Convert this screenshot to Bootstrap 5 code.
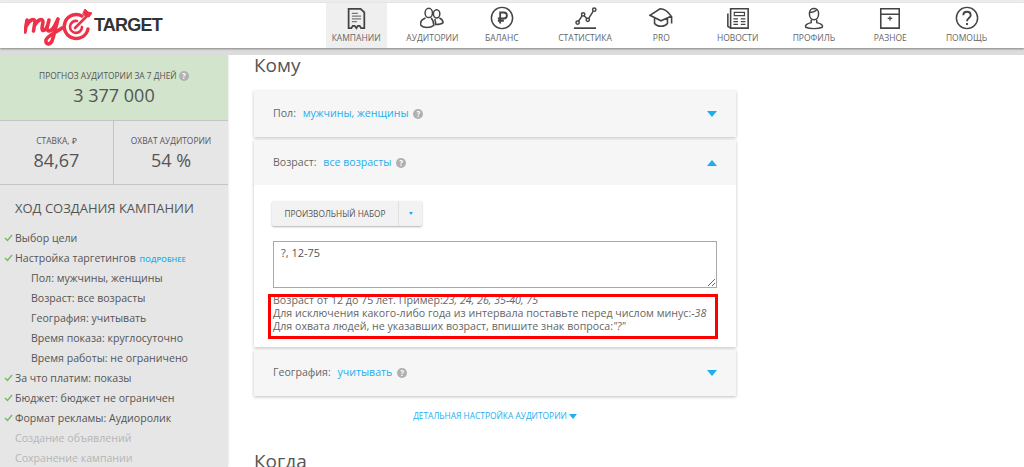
<!DOCTYPE html>
<html lang="en">
<head>
<meta charset="UTF-8">
<title>myTarget</title>
<link href="https://cdn.jsdelivr.net/npm/bootstrap@5.3.0/dist/css/bootstrap.min.css" rel="stylesheet">
<style>
html, body { height: 467px; overflow: hidden; }
body { font-family: "Open Sans", sans-serif; color: #555; background: #fff; font-size: 11px; }
.top-line { height: 3px; background: #ececec; }
.top-head { height: 45px; background: #fff; box-shadow: 0 1px 2px rgba(0,0,0,.4); position: relative; z-index: 3; }
.logo-box { width: 318px; padding-left: 24px; }
.logo-word { font-family: "Liberation Sans", sans-serif; font-weight: 700; font-size: 18px; color: #333; letter-spacing: -.8px; }
.nav-cell { width: 76.3px; }
.nav-cell.shift { margin-left: -7px; margin-right: 7px; }
.nav-lnk { width: 61px; height: 45px; color: #666; font-size: 8.5px; text-decoration: none; padding-top: 3px; white-space: nowrap; }
.nav-lnk.on { background: #efefef; }
.nav-lnk svg { width: 24px; height: 24px; margin-bottom: 2px; flex: none; fill: none; stroke: #444; stroke-width: 1.6; }
.grey-band { height: 7px; background: #dcdcdc; }
.page-wrap { height: 412px; overflow: hidden; }
.side-col { width: 228px; flex: none; background: #e6e6e6; box-shadow: 1px 0 2px rgba(0,0,0,.08); }
.fc-box { height: 66px; background: #d2e4cb; border-bottom: 1px solid #c4c4c4; text-align: center; padding-top: 14px; }
.fc-cap { font-size: 8.4px; color: #555; line-height: 13px; }
.fc-val { font-size: 18px; line-height: 24px; color: #555; margin-top: 1px; }
.q-dot { display: inline-block; width: 10px; height: 10px; border-radius: 50%; background: #b0b0b0; color: #fff; font-size: 8px; line-height: 10px; text-align: center; font-weight: 700; vertical-align: 0; }
.pair-row { height: 64px; border-bottom: 1px solid #c4c4c4; }
.pair-cell { text-align: center; padding-top: 13px; }
.pair-cell.lft { width: 114px; border-right: 1px solid #c4c4c4; }
.pair-cell.rgt { flex: 1; }
.step-title { font-size: 13px; color: #555; margin: 13px 0 10px 15px; line-height: 20px; }
.step-row { height: 20px; line-height: 20px; font-size: 10.6px; color: #555; padding-left: 15px; position: relative; white-space: nowrap; }
.step-row.sub { padding-left: 31px; }
.step-row.off { color: #b5b5b5; }
.step-row .tick { position: absolute; left: 4px; top: 6px; width: 9px; height: 8px; fill: none; stroke: #6fc05c; stroke-width: 1.5; }
.more-lnk { color: #1eaef0; font-size: 7.5px; font-weight: 600; margin-left: 1px; }
.main-col { padding-left: 26px; width: 508px; flex: none; box-sizing: content-box; }
.sec-head { font-size: 19px; color: #555; line-height: 24px; margin: 0; }
.sec-head.kom { margin-top: -2px; margin-bottom: 14px; }
.sec-head.kog { margin-top: 27px; }
.acc-box { width: 482px; box-shadow: 0 1px 3px rgba(0,0,0,.25); margin-bottom: 3px; }
.acc-top { background: #f6f6f6; font-size: 10.6px; padding: 0 19px 0 19px; color: #666; }
.acc-top.tall { height: 46px; }
.acc-top.short { height: 45px; }
.acc-val { color: #1eaef0; margin-left: 4px; margin-right: 2px; }
.tri-d { width: 0; height: 0; border-left: 5px solid transparent; border-right: 5px solid transparent; border-top: 6px solid #1eaef0; }
.tri-u { width: 0; height: 0; border-left: 5px solid transparent; border-right: 5px solid transparent; border-bottom: 6px solid #1eaef0; }
.acc-body { background: #fff; padding: 16px 19px 0 18px; height: 162px; position: relative; }
.set-btn { width: 150px; height: 25px; background: #f2f2f2; box-shadow: 0 1px 2px rgba(0,0,0,.3); border-radius: 2px; font-size: 8.3px; color: #555; margin-bottom: 15px; }
.set-btn .lab { width: 127px; text-align: center; border-right: 1px solid #e0e0e0; line-height: 25px; }
.set-btn .arr { flex: 1; }
.mini-tri { width: 0; height: 0; border-left: 2px solid transparent; border-right: 2px solid transparent; border-top: 3px solid #1eaef0; }
.age-area { display: block; width: 444px; height: 47px; margin-left: 1px; border: 1px solid #a9a9a9; border-radius: 0; padding: 3px 7px; font-size: 11px; color: #555; font-family: "Open Sans", sans-serif; line-height: 15px; outline: none; margin-bottom: 6px; }
.hint-txt { font-size: 10.65px; line-height: 13px; color: #666; white-space: nowrap; margin-left: 1px; }
.red-frame { position: absolute; left: 14px; top: 109px; width: 450px; height: 45px; border: 3px solid #f00; pointer-events: none; }
.more-row { color: #1eaef0; font-size: 8.4px; width: 482px; text-align: center; margin-top: 14px; line-height: 12px; }
.more-row .tri-d { display: inline-block; border-left-width: 4px; border-right-width: 4px; border-top-width: 5px; margin-left: 2px; }
</style>
</head>
<body>
<div class="top-line"></div>
<header class="top-head d-flex">
  <div class="logo-box d-flex align-items-center">
    <svg width="70" height="45" viewBox="24 3 70 45" fill="none" stroke="#ee3048" stroke-linecap="round" stroke-linejoin="round">
      <path d="M27 20 L25 32 M27 25 C30 19 35 18 35 22 L33.5 31 M35 25 C38 19 43 18 43 22 L42 28 C42 32 45 31 47 27" stroke-width="3.6"/>
      <path d="M49 20 L47 28 C47 32 51 32 54 27 L58 19 L53 38 C51 46 45 45 46 40 C47 36 55 33 62 28" stroke-width="3.6"/>
      <path d="M82 16 A12 12 0 1 0 88 29" stroke-width="3.4"/>
      <path d="M77 21 A6 6 0 1 0 82 27" stroke-width="2.6"/>
      <path d="M75 28 L89 14" stroke-width="2.6"/>
      <path d="M83 13 L85 9 L88 12 L92 13 L89 17 L85 16 Z" fill="#ee3048" stroke-width="1"/>
    </svg>
    <span class="logo-word">TARGET</span>
  </div>
  <nav class="d-flex">
    <div class="nav-cell d-flex justify-content-center"><a class="nav-lnk on d-flex flex-column align-items-center" href="#">
      <svg viewBox="0 0 26 26"><path d="M5 3 H18 L22 7 V24 H18.5 L17 21.5 H15 L13.5 24 L11.5 21.5 H9.5 L8 24 H5 Z" stroke-width="1.9"/><path d="M8.5 8 H15 M8.5 11 H18.5 M8.5 14 H18.5 M8.5 17 H14" stroke="#777" stroke-width="1.4"/></svg>КАМПАНИИ</a></div>
    <div class="nav-cell d-flex justify-content-center"><a class="nav-lnk d-flex flex-column align-items-center" href="#">
      <svg viewBox="0 0 26 26"><ellipse cx="9.5" cy="7.5" rx="4" ry="5"/><ellipse cx="18" cy="8.5" rx="3.5" ry="4.5"/><path d="M6 13 C1 15 0 18 1 21 C4 24 11 24 15 21 C15 18 14 15 12 13 M16 14 C17 17 17 19 17 20 C21 20 24 19 25 18 C25 15 23 14 21 13"/></svg>АУДИТОРИИ</a></div>
    <div class="nav-cell shift d-flex justify-content-center"><a class="nav-lnk d-flex flex-column align-items-center" href="#">
      <svg viewBox="0 0 26 26"><circle cx="13" cy="13" r="11.5"/><path d="M11 19 V7 H15 A3 3 0 0 1 15 13.5 H8.5 M8.5 16 H15" stroke-width="2"/></svg>БАЛАНС</a></div>
    <div class="nav-cell d-flex justify-content-center"><a class="nav-lnk d-flex flex-column align-items-center" href="#">
      <svg viewBox="0 0 26 26"><path d="M1 24 H25" stroke-width="1.9"/><circle cx="5" cy="18" r="1.8"/><circle cx="11" cy="9" r="1.8"/><circle cx="16" cy="15" r="1.8"/><circle cx="23" cy="4" r="1.8"/><path d="M6 16.5 L10 10.5 M12 10.5 L15 13.5 M17 13.5 L22 5.5"/></svg>СТАТИСТИКА</a></div>
    <div class="nav-cell d-flex justify-content-center"><a class="nav-lnk d-flex flex-column align-items-center" href="#">
      <svg viewBox="0 0 26 26"><path d="M12 3 C15 3 20 5 24 11 L13 16 L1 10 Z M6 13 V19 C9 23 17 23 20 19 V13 M24.5 11 V19" stroke-width="1.7"/></svg>PRO</a></div>
    <div class="nav-cell d-flex justify-content-center"><a class="nav-lnk d-flex flex-column align-items-center" href="#">
      <svg viewBox="0 0 26 26"><path d="M5 3 H24 V24 H5 Z M2 8 V22 L5 24" stroke-width="1.7"/><path d="M9 7 H20 V10.5 H9 Z M8 14 H13 M16 14 H21 M8 17 H13 M16 17 H21 M8 20 H13 M16 20 H21" stroke-width="1.3"/></svg>НОВОСТИ</a></div>
    <div class="nav-cell d-flex justify-content-center"><a class="nav-lnk d-flex flex-column align-items-center" href="#">
      <svg viewBox="0 0 26 26"><path d="M8 8 C8 1 18 1 18 8 C18 12 16 15 13 15 C10 15 8 12 8 8 Z M8 7 C11 7 14 6 16 4"/><path d="M10 15 V18 C5 19 3 21 4 23 C8 25 18 25 22 23 C23 21 21 19 16 18 V15"/></svg>ПРОФИЛЬ</a></div>
    <div class="nav-cell d-flex justify-content-center"><a class="nav-lnk d-flex flex-column align-items-center" href="#">
      <svg viewBox="0 0 26 26"><path d="M3 3 H23 V24 H3 Z M3 9 H23" stroke-width="1.7"/><path d="M13 11 V16 M10.5 13.5 H15.5" stroke-width="1.3"/></svg>РАЗНОЕ</a></div>
    <div class="nav-cell d-flex justify-content-center"><a class="nav-lnk d-flex flex-column align-items-center" href="#">
      <svg viewBox="0 0 26 26"><circle cx="13" cy="13" r="11.5"/><path d="M9 10 C9 5 17 5 17 10 C17 13 13 13 13 16.5" stroke-width="2"/><path d="M13 18.5 V20.5" stroke-width="2"/></svg>ПОМОЩЬ</a></div>
  </nav>
</header>
<div class="grey-band"></div>
<div class="page-wrap d-flex">
  <aside class="side-col">
    <div class="fc-box">
      <div class="fc-cap">ПРОГНОЗ АУДИТОРИИ ЗА 7 ДНЕЙ <span class="q-dot">?</span></div>
      <div class="fc-val">3 377 000</div>
    </div>
    <div class="pair-row d-flex">
      <div class="pair-cell lft"><div class="fc-cap">СТАВКА, ₽</div><div class="fc-val">84,67</div></div>
      <div class="pair-cell rgt"><div class="fc-cap">ОХВАТ АУДИТОРИИ</div><div class="fc-val">54 %</div></div>
    </div>
    <div class="step-title">ХОД СОЗДАНИЯ КАМПАНИИ</div>
    <div class="step-row"><svg class="tick" viewBox="0 0 9 8"><path d="M1 4 L3.5 6.5 L8 1"/></svg>Выбор цели</div>
    <div class="step-row"><svg class="tick" viewBox="0 0 9 8"><path d="M1 4 L3.5 6.5 L8 1"/></svg>Настройка таргетингов <span class="more-lnk">ПОДРОБНЕЕ</span></div>
    <div class="step-row sub">Пол: мужчины, женщины</div>
    <div class="step-row sub">Возраст: все возрасты</div>
    <div class="step-row sub">География: учитывать</div>
    <div class="step-row sub">Время показа: круглосуточно</div>
    <div class="step-row sub">Время работы: не ограничено</div>
    <div class="step-row"><svg class="tick" viewBox="0 0 9 8"><path d="M1 4 L3.5 6.5 L8 1"/></svg>За что платим: показы</div>
    <div class="step-row"><svg class="tick" viewBox="0 0 9 8"><path d="M1 4 L3.5 6.5 L8 1"/></svg>Бюджет: бюджет не ограничен</div>
    <div class="step-row"><svg class="tick" viewBox="0 0 9 8"><path d="M1 4 L3.5 6.5 L8 1"/></svg>Формат рекламы: Аудиоролик</div>
    <div class="step-row off">Создание объявлений</div>
    <div class="step-row off">Сохранение кампании</div>
  </aside>
  <main class="main-col">
    <h2 class="sec-head kom">Кому</h2>
    <div class="acc-box">
      <div class="acc-top tall d-flex align-items-center justify-content-between">
        <div>Пол: <span class="acc-val">мужчины, женщины</span> <span class="q-dot">?</span></div><div class="tri-d"></div>
      </div>
    </div>
    <div class="acc-box">
      <div class="acc-top short d-flex align-items-center justify-content-between">
        <div>Возраст: <span class="acc-val">все возрасты</span> <span class="q-dot">?</span></div><div class="tri-u"></div>
      </div>
      <div class="acc-body">
        <div class="set-btn d-flex align-items-center">
          <div class="lab">ПРОИЗВОЛЬНЫЙ НАБОР</div>
          <div class="arr d-flex justify-content-center"><div class="mini-tri"></div></div>
        </div>
        <textarea class="age-area">?, 12-75</textarea>
        <div class="hint-txt">Возраст от 12 до 75 лет. Пример:<i>23, 24, 26, 35-40, 75</i><br>Для исключения какого-либо года из интервала поставьте перед числом минус:<i>-38</i><br>Для охвата людей, не указавших возраст, впишите знак вопроса:<i>"?"</i></div>
        <div class="red-frame"></div>
      </div>
    </div>
    <div class="acc-box">
      <div class="acc-top tall d-flex align-items-center justify-content-between">
        <div>География: <span class="acc-val">учитывать</span> <span class="q-dot">?</span></div><div class="tri-d"></div>
      </div>
    </div>
    <div class="more-row">ДЕТАЛЬНАЯ НАСТРОЙКА АУДИТОРИИ<span class="tri-d"></span></div>
    <h2 class="sec-head kog">Когда</h2>
  </main>
</div>
<script src="https://cdn.jsdelivr.net/npm/bootstrap@5.3.0/dist/js/bootstrap.bundle.min.js"></script>
</body>
</html>
